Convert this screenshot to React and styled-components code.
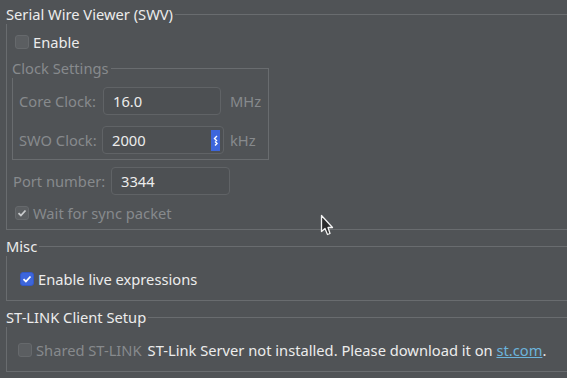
import React from "react";
import styled, { createGlobalStyle } from "styled-components";

const Global = createGlobalStyle`
  html, body {
    margin: 0;
    padding: 0;
    background: #505356;
    overflow: hidden;
  }
  body {
    font-family: "Noto Sans", "Open Sans", sans-serif;
    font-size: 14.7px;
    color: #ececec;
  }
`;

const Page = styled.div`
  position: relative;
  width: 567px;
  height: 378px;
  padding: 4px 0 0 6px;
  box-sizing: border-box;
  display: flex;
  flex-direction: column;
  gap: 6px;
`;

const Group = styled.fieldset`
  margin: 0;
  padding: 0 0 ${p => p.$pb || 0}px ${p => p.$pl || 0}px;
  border: 1px solid #696c6f;
  border-right: ${p => (p.$open ? "none" : "1px solid #696c6f")};
  min-width: 0;
  width: ${p => (p.$width ? `${p.$width}px` : "auto")};
  box-sizing: border-box;
`;

const Legend = styled.legend`
  padding: 0 2px 0 0;
  margin-left: -1px;
  line-height: 20px;
  font-size: 14.7px;
  color: ${p => (p.$disabled ? "#878a8d" : "#ececec")};
`;

const Row = styled.div`
  display: flex;
  align-items: center;
  height: ${p => p.$h || 20}px;
  margin-top: ${p => p.$mt || 0}px;
  padding-left: ${p => p.$pl || 0}px;
`;

const Box = styled.span`
  width: 14px;
  height: 14px;
  box-sizing: border-box;
  border-radius: 3px;
  border: 1px solid ${p => (p.$on ? "#3358c8" : "#66696c")};
  background: ${p => (p.$on ? "#3d66dc" : "#5b5e61")};
  display: flex;
  align-items: center;
  justify-content: center;
  margin-right: 4px;
  flex: none;
`;

const Label = styled.span`
  color: ${p => (p.$disabled ? "#878a8d" : "#ececec")};
  white-space: nowrap;
  width: ${p => (p.$w ? `${p.$w}px` : "auto")};
  margin-left: ${p => p.$ml || 0}px;
  flex: none;
`;

const Field = styled.div`
  width: ${p => p.$w}px;
  height: 28px;
  box-sizing: border-box;
  border: 1px solid #606366;
  border-radius: 4px;
  background: #4d5053;
  display: flex;
  align-items: center;
  padding-left: 9px;
  color: #ececec;
  margin-right: ${p => p.$mr || 0}px;
  flex: none;
`;

const FieldText = styled.span`
  flex: 1;
`;

const Spin = styled.span`
  width: 9px;
  height: 21px;
  background: #3d66dc;
  margin-right: 3px;
  display: flex;
  align-items: center;
  justify-content: center;
`;

const Link = styled.span`
  color: #6cb4dc;
  text-decoration: underline;
`;

const Cursor = styled.svg`
  position: absolute;
  left: 320px;
  top: 214px;
`;

const Check = ({ color }) => (
  <svg width="10" height="8" viewBox="0 0 10 8">
    <path d="M1.5 4.2 L3.9 6.5 L8.5 1.5" fill="none" stroke={color} strokeWidth="1.8" />
  </svg>
);

export default function App() {
  return (
    <>
      <Global />
      <Page>
        <Group $open $pb={6}>
          <Legend>Serial Wire Viewer (SWV)</Legend>
          <Row $mt={8} $pl={8}>
            <Box />
            <Label>Enable</Label>
          </Row>
          <Group $width={257} $pb={5} style={{ marginLeft: 5, marginTop: 6 }}>
            <Legend $disabled>Clock Settings</Legend>
            <Row $h={28} $mt={9} $pl={6}>
              <Label $disabled $w={84}>Core Clock:</Label>
              <Field $w={118} $mr={9}>
                <FieldText>16.0</FieldText>
              </Field>
              <Label $disabled>MHz</Label>
            </Row>
            <Row $h={28} $mt={11} $pl={6}>
              <Label $disabled $w={83}>SWO Clock:</Label>
              <Field $w={122} $mr={6}>
                <FieldText>2000</FieldText>
                <Spin>
                  <svg width="5" height="11" viewBox="0 0 5 11">
                    <path d="M4 1 L1.5 3.5 L4 6" fill="none" stroke="#fff" strokeWidth="1.4" />
                    <path d="M2 6.5 L4 8.5 L2 10.5" fill="none" stroke="#fff" strokeWidth="1.4" />
                  </svg>
                </Spin>
              </Field>
              <Label $disabled>kHz</Label>
            </Row>
          </Group>
          <Row $h={28} $mt={7} $pl={6}>
            <Label $disabled $w={98}>Port number:</Label>
            <Field $w={119}>
              <FieldText>3344</FieldText>
            </Field>
          </Row>
          <Row $mt={8} $pl={8}>
            <Box>
              <Check color="#c9cbcd" />
            </Box>
            <Label $disabled>Wait for sync packet</Label>
          </Row>
        </Group>

        <Group $open $pb={11}>
          <Legend>Misc</Legend>
          <Row $mt={13} $pl={13}>
            <Box $on>
              <Check color="#ffffff" />
            </Box>
            <Label>Enable live expressions</Label>
          </Row>
        </Group>

        <Group $open $pb={11}>
          <Legend>ST-LINK Client Setup</Legend>
          <Row $mt={13} $pl={11}>
            <Box />
            <Label $disabled>Shared ST-LINK</Label>
            <Label $ml={6}>
              ST-Link Server not installed. Please download it on <Link>st.com</Link>.
            </Label>
          </Row>
        </Group>

        <Cursor width="14" height="24" viewBox="0 0 14 24">
          <path
            d="M1.5 1.5 L1.5 17.5 L5 14.5 L7.5 20.5 L10 19.5 L8 13.5 L12.5 13.5 Z"
            fill="#2b2b2b"
            stroke="#f2f2f2"
            strokeWidth="1.3"
            strokeLinejoin="round"
          />
        </Cursor>
      </Page>
    </>
  );
}
